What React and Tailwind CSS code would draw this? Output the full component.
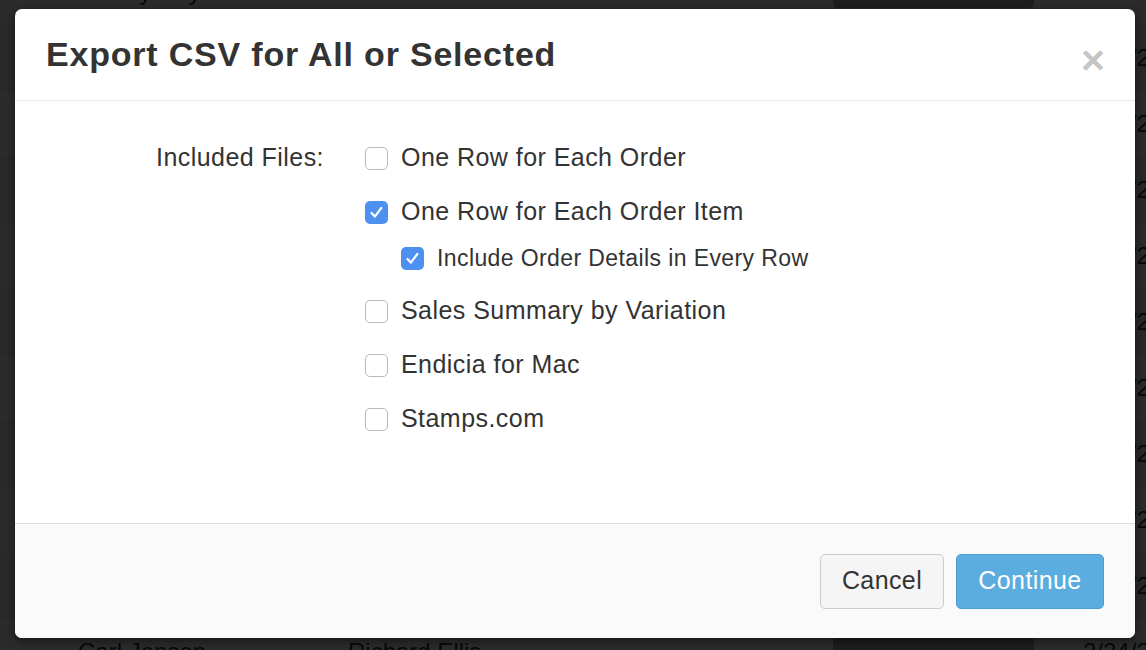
import React from "react";

const rows = [
  { name: "Shelby Ray", buyer: "Peter Phelan", date: "2/24/2015" },
  { name: "Anna Brooks", buyer: "Mark Holt", date: "2/24/2015" },
  { name: "Dana Miles", buyer: "Sara Lind", date: "2/24/2015" },
  { name: "Jon Pratt", buyer: "Eli Ford", date: "2/24/2015" },
  { name: "Kim Dale", buyer: "Tom Reyes", date: "2/24/2015" },
  { name: "Lee Owens", buyer: "Amy Cole", date: "2/24/2015" },
  { name: "Rita Shaw", buyer: "Ned Fox", date: "2/24/2015" },
  { name: "Paul Hart", buyer: "Ivy Bell", date: "2/24/2015" },
  { name: "Gus Webb", buyer: "Zoe Lane", date: "2/24/2015" },
  { name: "Will Tran", buyer: "Ada Moss", date: "2/24/2015" },
  { name: "Carl Jensen", buyer: "Richard Ellis", date: "2/24/2015" },
];

const options = [
  { label: "One Row for Each Order", checked: false },
  {
    label: "One Row for Each Order Item",
    checked: true,
    sub: { label: "Include Order Details in Every Row", checked: true },
  },
  { label: "Sales Summary by Variation", checked: false },
  { label: "Endicia for Mac", checked: false },
  { label: "Stamps.com", checked: false },
];

function Box({ checked }) {
  if (checked) {
    return (
      <span className="w-[23px] h-[23px] rounded-[5px] bg-[#4d90ef] flex items-center justify-center shrink-0">
        <svg width="23" height="23" viewBox="0 0 23 23" fill="none">
          <path d="M6.5 12l3.3 3.6L16.3 7" stroke="white" strokeWidth="2.2" strokeLinecap="round" strokeLinejoin="round" />
        </svg>
      </span>
    );
  }
  return <span className="w-[23px] h-[23px] rounded-[5px] border border-[#b9b9b9] bg-white shrink-0" />;
}

export default function App() {
  return (
    <div className="relative w-[1146px] h-[650px] overflow-hidden bg-white font-['Liberation_Sans',Arial,sans-serif]">
      {/* page behind the dialog */}
      <div className="-mt-[41px] flex flex-col">
        {rows.map((r, i) => (
          <div key={i} className={`h-[66px] flex items-center text-[24px] text-[#333] ${i % 2 ? "bg-[#f4f4f4]" : "bg-white"}`}>
            <span className="w-[270px] ml-[78px] shrink-0 whitespace-nowrap">{r.name}</span>
            <span className="w-[485px] shrink-0 whitespace-nowrap">{r.buyer}</span>
            <span className="w-[201px] h-[32px] shrink-0 rounded-[5px] bg-[#a9a9a9]" />
            <span className="ml-[49px] shrink-0 whitespace-nowrap">{r.date}</span>
          </div>
        ))}
      </div>

      <div className="absolute inset-0 bg-black/[0.83]" />

      {/* dialog */}
      <div className="absolute left-[15px] top-[9px] w-[1120px] rounded-[7px] bg-white overflow-hidden shadow-[0_3px_9px_rgba(0,0,0,0.5)] text-[#333]">
        <div className="h-[92px] border-b border-[#e8e8e8] flex items-center justify-between pl-[31px] pr-[30px]">
          <h1 className="text-[34px] font-bold tracking-[0.8px]">Export CSV for All or Selected</h1>
          <span className="text-[41px] font-bold leading-none text-[#c6c6c6] mt-[12px]">×</span>
        </div>

        <div className="h-[422px] pt-[42px] flex">
          <div className="w-[309px] h-[30px] flex items-center justify-end text-[25px] tracking-[0.45px]">Included Files:</div>
          <div className="ml-[41px] flex flex-col gap-[24px]">
            {options.map((o) => (
              <div key={o.label}>
                <label className="h-[30px] flex items-center gap-[13px] text-[25px] tracking-[0.45px]">
                  <Box checked={o.checked} />
                  <span>{o.label}</span>
                </label>
                {o.sub && (
                  <label className="mt-[17px] ml-[36px] h-[28px] flex items-center gap-[13px] text-[23px] tracking-[0.4px]">
                    <Box checked={o.sub.checked} />
                    <span>{o.sub.label}</span>
                  </label>
                )}
              </div>
            ))}
          </div>
        </div>

        <div className="h-[115px] border-t border-[#dddddd] bg-[#fafafa] flex items-center justify-end gap-[12px] pr-[31px]">
          <button className="w-[124px] h-[55px] rounded-[5px] border border-[#cccccc] bg-[#f5f5f5] text-[25px] tracking-[0.4px] text-[#333]">Cancel</button>
          <button className="w-[148px] h-[55px] rounded-[5px] border border-[#4b9fd6] bg-[#5bacdf] text-[25px] tracking-[0.4px] text-white">Continue</button>
        </div>
      </div>
    </div>
  );
}
